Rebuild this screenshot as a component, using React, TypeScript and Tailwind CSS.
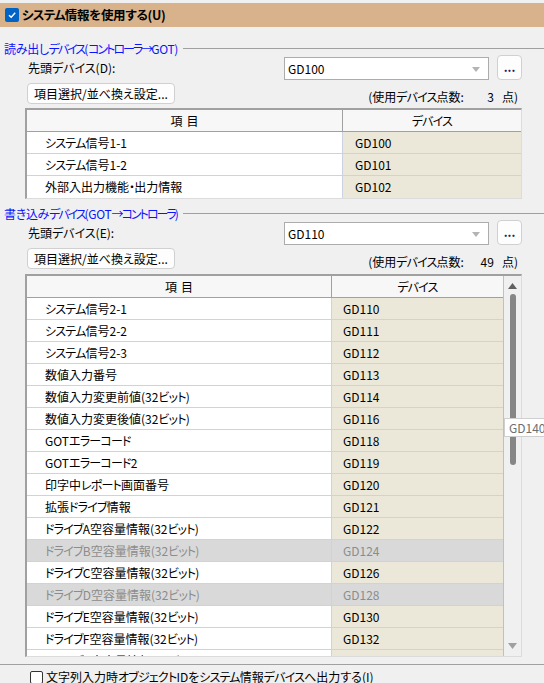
import React from 'react';

type Row = { name: string; dev: string; off?: boolean };

const readRows: Row[] = [
  { name: 'システム信号1-1', dev: 'GD100' },
  { name: 'システム信号1-2', dev: 'GD101' },
  { name: '外部入出力機能・出力情報', dev: 'GD102' },
];

const writeRows: Row[] = [
  { name: 'システム信号2-1', dev: 'GD110' },
  { name: 'システム信号2-2', dev: 'GD111' },
  { name: 'システム信号2-3', dev: 'GD112' },
  { name: '数値入力番号', dev: 'GD113' },
  { name: '数値入力変更前値(32ビット)', dev: 'GD114' },
  { name: '数値入力変更後値(32ビット)', dev: 'GD116' },
  { name: 'GOTエラーコード', dev: 'GD118' },
  { name: 'GOTエラーコード2', dev: 'GD119' },
  { name: '印字中レポート画面番号', dev: 'GD120' },
  { name: '拡張ドライブ情報', dev: 'GD121' },
  { name: 'ドライブA空容量情報(32ビット)', dev: 'GD122' },
  { name: 'ドライブB空容量情報(32ビット)', dev: 'GD124', off: true },
  { name: 'ドライブC空容量情報(32ビット)', dev: 'GD126' },
  { name: 'ドライブD空容量情報(32ビット)', dev: 'GD128', off: true },
  { name: 'ドライブE空容量情報(32ビット)', dev: 'GD130' },
  { name: 'ドライブF空容量情報(32ビット)', dev: 'GD132' },
  { name: 'ドライブG空容量情報(32ビット)', dev: 'GD134' },
];

// Meiryo UI draws katakana narrower than Noto; squeeze katakana runs a little
function Kt({ text, tight }: { text: string; tight?: boolean }) {
  const parts = text.split(/([\u30A0-\u30FF→]+)/);
  return (
    <>
      {parts.map((p, i) =>
        /^[\u30A0-\u30FF→]+$/.test(p) ? (
          <span key={i} className={tight ? 'tracking-[-2px]' : 'tracking-[-0.8px]'}>
            {p}
          </span>
        ) : (
          <React.Fragment key={i}>{p}</React.Fragment>
        )
      )}
    </>
  );
}

function SectionTitle({ text }: { text: string }) {
  return (
    <div className="flex items-center h-[16px] pl-[4px]">
      <span className="text-[#0a14ff] whitespace-nowrap tracking-[-0.3px]">
        <Kt text={text} tight />
      </span>
      <div className="flex-1 h-px bg-[#a0a0a0] ml-[5px] mt-[-1px]" />
    </div>
  );
}

function DeviceRow({ label, value }: { label: string; value: string }) {
  return (
    <div className="flex items-end h-[25px] mt-[-2px] pl-[28px]">
      <span className="w-[256px] self-center">{label}</span>
      <div className="relative w-[205px] h-[23px] bg-white border border-[#acacac] flex items-center pl-[3px]">
        <span>{value}</span>
        <svg className="absolute right-[8px] top-[9px]" width="8" height="5" viewBox="0 0 8 5">
          <path d="M0 0 L8 0 L4 5 Z" fill="#b4b4b4" />
        </svg>
      </div>
      <div className="ml-[8px] w-[25px] h-[25px] bg-[#fdfdfd] border border-[#d0d0d0] rounded-[4px] flex items-end justify-center text-[#202060] font-bold leading-none pb-[6px]">
        ...
      </div>
    </div>
  );
}

function ButtonRow({ count }: { count: string }) {
  return (
    <div className="flex items-end h-[21px] mt-[3px] pl-[27px] pr-[26px]">
      <div className="h-[21px] px-[6px] bg-[#fdfdfd] border border-[#d0d0d0] rounded-[4px] flex items-center">
        項目選択/並べ換え設定...
      </div>
      <div className="ml-auto flex leading-[14px]">
        <span>(使用<Kt text="デバイス" />点数:</span>
        <span className="w-[30px] text-right">{count}</span>
        <span className="ml-[8px]">点)</span>
      </div>
    </div>
  );
}

function Header({ col1 }: { col1: string }) {
  return (
    <div className="flex h-[22px] border-b border-[#a0a0a0] bg-[#f7f7f7]">
      <div className={`${col1} shrink-0 flex items-center justify-center border-r border-[#a0a0a0]`}>
        項<span className="w-[4px]" />目
      </div>
      <div className="flex-1 flex items-center justify-center">
        <Kt text="デバイス" />
      </div>
    </div>
  );
}

export default function App() {
  return (
    <div className="relative w-[544px] h-[683px] overflow-hidden bg-[#f0f0f0] text-black text-[12px] leading-[16px] font-['Noto_Sans_CJK_JP','Noto_Sans',sans-serif] [font-feature-settings:'palt']">
      {/* header band */}
      <div className="mt-[3px] h-[24px] bg-[#d8b28b] flex items-center pl-[5px]">
        <div className="w-[14px] h-[14px] rounded-[2px] bg-[#0063c6] flex items-center justify-center">
          <svg width="10" height="10" viewBox="0 0 10 10">
            <path d="M2 5.2 L4.2 7.3 L8.2 2.8" fill="none" stroke="white" strokeWidth="1.4" />
          </svg>
        </div>
        <span className="ml-[3px] font-bold text-[12.5px] tracking-[-0.3px]">
          <Kt text="システム情報を使用する(U)" />
        </span>
      </div>

      {/* read section */}
      <div className="mt-[14px]">
        <SectionTitle text="読み出しデバイス(コントローラ→GOT)" />
      </div>
      <DeviceRow label="先頭デバイス(D):" value="GD100" />
      <ButtonRow count="3" />
      <div className="mt-[4px] ml-[25px] w-[497px] border-l-2 border-t-2 border-[#a0a0a0] border-r border-b border-r-[#dcdcdc] border-b-[#dcdcdc]">
        <Header col1="w-[316px]" />
        {readRows.map((r, i) => (
          <div key={i} className={`flex h-[22px] ${i < readRows.length - 1 ? 'border-b border-[#cbd2e4]' : ''}`}>
            <div className="w-[316px] shrink-0 flex items-center pl-[18px] bg-white border-r border-[#cbd2e4]">
              <Kt text={r.name} />
            </div>
            <div className="flex-1 flex items-center pl-[12px] bg-[#ece8d9]">{r.dev}</div>
          </div>
        ))}
      </div>

      {/* write section */}
      <div className="mt-[7px]">
        <SectionTitle text="書き込みデバイス(GOT→コントローラ)" />
      </div>
      <DeviceRow label="先頭デバイス(E):" value="GD110" />
      <ButtonRow count="49" />
      <div className="mt-[5px] ml-[25px] w-[497px] h-[383px] flex border-l-2 border-t-2 border-[#a0a0a0] border-r border-b border-r-[#dcdcdc] border-b-[#dcdcdc]">
        <div className="w-[477px] flex flex-col border-r border-[#c0c0c0]">
          <Header col1="w-[305px]" />
          <div className="flex-1 overflow-hidden">
            {writeRows.map((r, i) => (
              <div key={i} className="flex h-[22px] border-b border-[#cbd2e4]">
                <div className={`w-[305px] shrink-0 flex items-center pl-[18px] border-r border-[#cbd2e4] ${r.off ? 'bg-[#d9d9d9] text-[#8c8c8c]' : 'bg-white'}`}>
                  <Kt text={r.name} />
                </div>
                <div className={`flex-1 flex items-center pl-[11px] ${r.off ? 'bg-[#d9d9d9] text-[#8c8c8c]' : 'bg-[#ece8d9]'}`}>{r.dev}</div>
              </div>
            ))}
          </div>
        </div>
        {/* scrollbar */}
        <div className="flex-1 flex flex-col items-center bg-[#f0f0f0]">
          <svg className="mt-[7px]" width="9" height="6" viewBox="0 0 9 6">
            <path d="M0 6 L4.5 0 L9 6 Z" fill="#606060" />
          </svg>
          <div className="mt-[5px] w-[6px] h-[171px] rounded-full bg-[#868686]" />
          <div className="flex-1" />
          <svg className="mb-[7px]" width="9" height="6" viewBox="0 0 9 6">
            <path d="M0 0 L9 0 L4.5 6 Z" fill="#a0a0a0" />
          </svg>
        </div>
      </div>

      <div className="mt-[7px] h-px bg-[#a0a0a0]" />
      <div className="mt-[5px] flex items-center h-[14px] pl-[30px]">
        <div className="w-[13px] h-[13px] bg-white border border-[#333] rounded-[2px]" />
        <span className="ml-[3px]">
          <Kt text="文字列入力時オブジェクトIDをシステム情報デバイスへ出力する(I)" />
        </span>
      </div>

      {/* tooltip */}
      <div className="absolute left-[504px] top-[418px] h-[19px] pl-[4px] pr-[6px] bg-white border border-[#cfcfcf] text-[#6e6e6e] flex items-center">
        GD140
      </div>
    </div>
  );
}
